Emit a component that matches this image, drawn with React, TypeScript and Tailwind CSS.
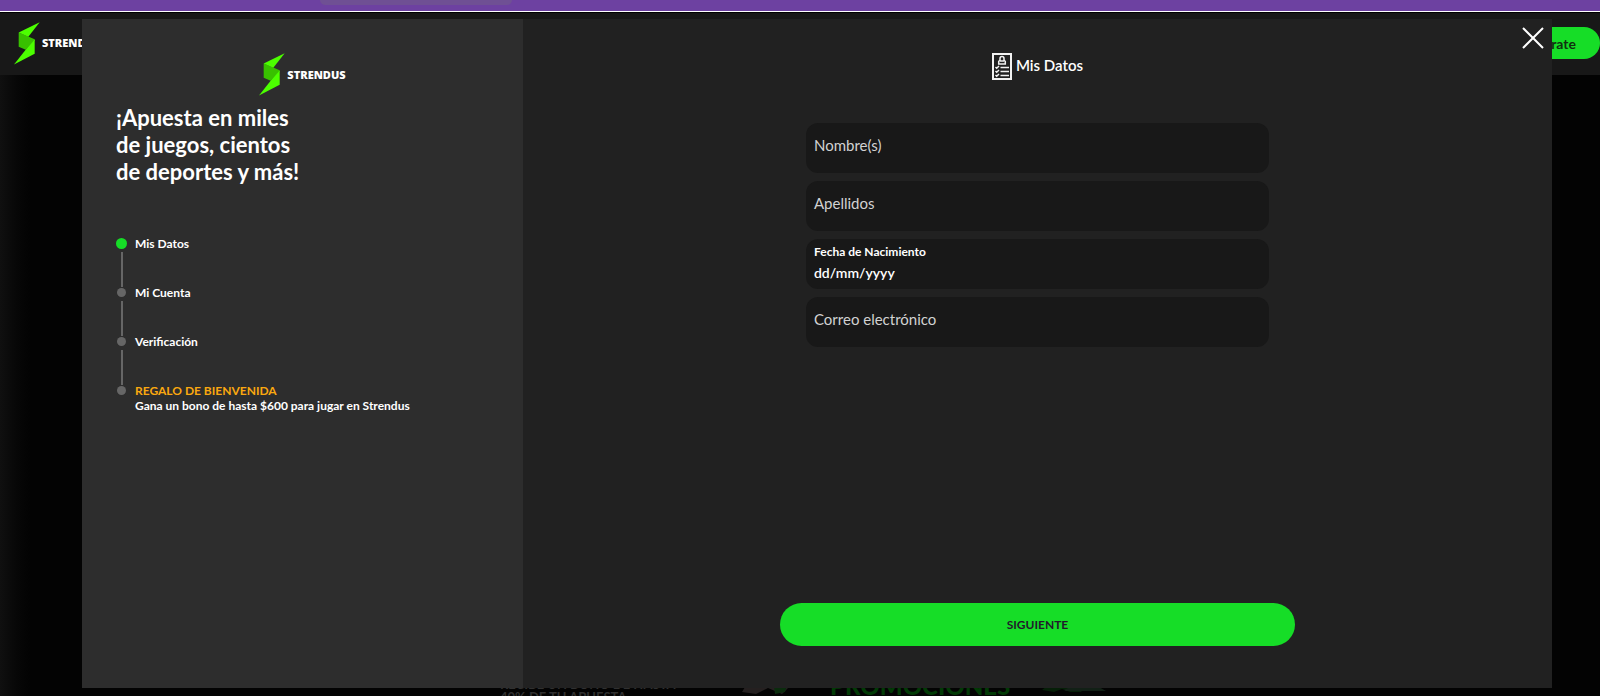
const steps = [
  { title: "Mis Datos", active: true },
  { title: "Mi Cuenta" },
  { title: "Verificación" },
  {
    title: "REGALO DE BIENVENIDA",
    text: "Gana un bono de hasta $600 para jugar en Strendus",
    highlight: true,
  },
];

const Logo = () => (
  <div className="flex items-center gap-0.5">
    <svg viewBox="58 159 78 128" className="h-[43px] w-[26px] shrink-0">
      <path d="M72 190L120 210V214L93 242L72 233Z" fill="#38c100" />
      <path d="M135 159L72 190L101 203Z" fill="#4cff00" />
      <path d="M120 211V254L58 286L93 242Z" fill="#4cff00" />
    </svg>
    <span className="font-['Noto_Sans',sans-serif] text-[11px] leading-4 font-black text-white">
      STRENDUS
    </span>
  </div>
);

const FormIcon = () => (
  <svg viewBox="0 0 20 27" className="h-[27px] w-5" fill="none" stroke="#f2f2f2">
    <rect x="1" y="1" width="18" height="25" strokeWidth="2" />
    <path d="M8 7V5.500a2 2 0 0 1 4 0V7L13.300 8.500V11H6.700V8.500ZM8 8h4" strokeWidth="1.500" />
    <path d="M8.500 14.500H17M8.500 18.500H17M8.500 22.500H17" strokeWidth="1.600" />
    <path d="M3.500 14l1.200 1.200L7 13M3.500 18l1.200 1.200L7 17M3.500 22l1.200 1.200L7 21" strokeWidth="1.500" />
  </svg>
);

const Field = ({ id, label, type = "text" }: { id: string; label: string; type?: string }) => (
  <div className="flex h-[50px] items-center gap-2 rounded-xl bg-[#181818] px-2 pb-1.5">
    <label htmlFor={id} className="text-[15px] leading-5 text-[#d2d2d2]">
      {label}
    </label>
    <input
      id={id}
      type={type}
      className="min-w-0 flex-1 bg-transparent text-[15px] text-white outline-none"
    />
  </div>
);

const Page = () => (
  <div className="flex h-screen flex-col overflow-hidden bg-linear-to-r from-[#101010] to-[#030303] to-[30px]">
    <div className="flex h-[11px] shrink-0 items-start bg-[#6d41a1] pl-[20%]">
      <div className="h-[5px] w-48 rounded-b-xl bg-[#6f5094]" />
    </div>
    <div className="h-px shrink-0 bg-white" />
    <header className="flex h-[63px] shrink-0 items-center justify-between border-t border-black bg-[#181818] pb-0.5 pl-3.5">
      <Logo />
      <button className="h-8 rounded-full bg-[#16dd27] px-6 text-[14px] font-bold text-[#103010]">
        Regístrate
      </button>
    </header>
    <div className="mt-auto -mb-2 flex h-7 shrink-0 items-end pl-[500px] font-bold">
      <p className="w-[180px] text-[13px] leading-[13px] whitespace-nowrap text-[#303030]">
        RECIBE UN BONO DE HASTA
        <br />
        40% DE TU APUESTA
      </p>
      <svg viewBox="0 0 110 32" className="mb-1 h-8 w-[110px]">
        <path d="M62 24l6-10h28l12 6-6 6-14-6-12 6Z" fill="#252020" />
        <path d="M94 18l14-4-3 10-10 2Z" fill="#0a2c0d" />
      </svg>
      <p className="mb-1 ml-10 text-[24px] leading-7 font-black text-[#013a05]">
        PROMOCIONES
      </p>
      <svg viewBox="0 0 100 32" className="mb-1 h-8 w-[100px]">
        <path d="M32 22l10-8 8 6 16-2 6 6H60l-8-3-8 3Z" fill="#061f08" />
        <path d="M54 22l10-5 10 3 8-5 14 8H56Z" fill="#122016" />
      </svg>
    </div>
  </div>
);

const Steps = () => (
  <ol className="mt-[53px]">
    {steps.map((step, i) => (
      <li key={step.title} className="flex items-start gap-2">
        <div className="flex w-[11px] shrink-0 flex-col items-center gap-[3px]">
          <div className="flex h-[11px] items-center">
            {step.active ? (
              <div className="size-[11px] rounded-full bg-[#16dd27]" />
            ) : (
              <div className="size-[9px] rounded-full bg-[#666]" />
            )}
          </div>
          {i < steps.length - 1 && <div className="h-[35px] w-0.5 bg-[#666]" />}
        </div>
        <div className="-mt-0.5 text-[12px] leading-[15px] font-bold text-white">
          <p className={step.highlight ? "text-[#faa80f]" : ""}>{step.title}</p>
          {step.text && <p>{step.text}</p>}
        </div>
      </li>
    ))}
  </ol>
);

const RegisterModal = () => (
  <div className="fixed inset-0 pt-[19px] pr-12 pb-2 pl-[82px]">
    <div role="dialog" aria-label="Registro" className="relative flex h-full">
      <aside className="flex w-[30%] flex-col bg-[#2d2d2d] px-[34px] pt-[34px]">
        <div className="flex justify-center">
          <Logo />
        </div>
        <h1 className="mt-2 text-[22px] leading-[27px] font-bold text-white">
          ¡Apuesta en miles
          <br />
          de juegos, cientos
          <br />
          de deportes y más!
        </h1>
        <Steps />
      </aside>
      <form className="flex flex-1 flex-col items-center bg-[#212121] pt-[34px] pb-[42px]">
        <h2 className="flex items-start gap-1 text-[15px] leading-6 font-semibold text-white">
          <FormIcon />
          Mis Datos
        </h2>
        <div className="mt-[43px] flex w-[45%] flex-col gap-2">
          <Field id="nombre" label="Nombre(s)" />
          <Field id="apellidos" label="Apellidos" />
          <div className="flex h-[50px] flex-col rounded-xl bg-[#181818] px-2 pt-1">
            <label
              htmlFor="nacimiento"
              className="text-[12px] leading-[18px] font-bold text-white"
            >
              Fecha de Nacimiento
            </label>
            <input
              id="nacimiento"
              type="text"
              placeholder="dd/mm/yyyy"
              className="w-full bg-transparent text-[14px] leading-6 font-semibold text-white outline-none placeholder:text-white"
            />
          </div>
          <Field id="correo" label="Correo electrónico" type="email" />
        </div>
        <button
          type="submit"
          className="mt-auto h-[43px] w-1/2 rounded-full bg-[#16dd27] text-[12px] font-bold text-[#211a2b]"
        >
          SIGUIENTE
        </button>
      </form>
      <button aria-label="Cerrar" className="absolute top-[7px] right-[7px]">
        <svg viewBox="0 0 24 24" className="size-6" stroke="#fff" strokeWidth="2">
          <path d="M2 2l20 20M22 2L2 22" />
        </svg>
      </button>
    </div>
  </div>
);

const App = () => {
  return (
    <div className="font-['Lato','Noto_Sans',sans-serif]">
      <Page />
      <RegisterModal />
    </div>
  );
};

export default App;
